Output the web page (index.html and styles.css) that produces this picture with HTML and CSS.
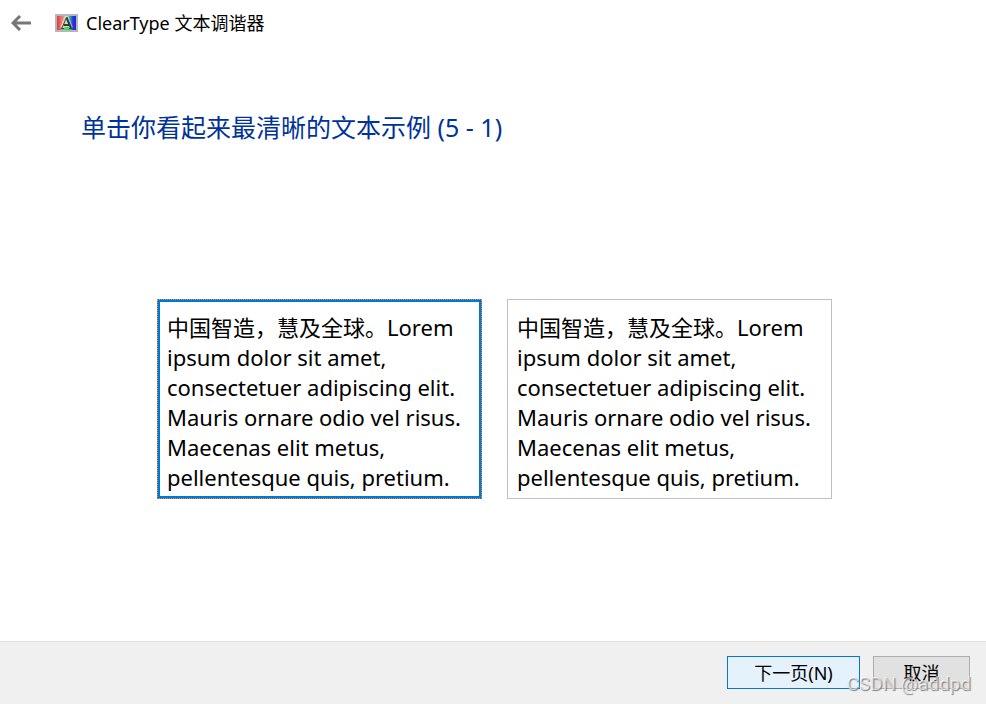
FILE: index.html
```html
<!DOCTYPE html>
<html lang="zh-CN">
<head>
    <meta charset="UTF-8">
    <meta name="viewport" content="width=device-width, initial-scale=1.0">
    <title>ClearType 文本调谐器</title>
    <link rel="stylesheet" href="styles.css">
</head>
<body>
    <header class="titlebar">
        <button class="back" type="button" aria-label="返回">
            <svg width="20" height="16" viewBox="0 0 20 16" fill="none" stroke="#767676" stroke-width="3">
                <path d="M2 8H20M9 1L2 8L9 15"/>
            </svg>
        </button>
        <svg class="app-icon" width="23" height="18" viewBox="0 0 23 18">
            <defs>
                <linearGradient id="rgb" x1="0" y1="0" x2="1" y2="0">
                    <stop offset="0" stop-color="#e03a3a"/>
                    <stop offset="0.3" stop-color="#e58a80"/>
                    <stop offset="0.5" stop-color="#7ccf8c"/>
                    <stop offset="0.7" stop-color="#2f9fae"/>
                    <stop offset="0.85" stop-color="#2333e0"/>
                    <stop offset="1" stop-color="#2a22d8"/>
                </linearGradient>
                <radialGradient id="glow" cx="0.5" cy="1" r="0.4">
                    <stop offset="0" stop-color="#22e83c"/>
                    <stop offset="1" stop-color="#22e83c" stop-opacity="0"/>
                </radialGradient>
            </defs>
            <rect width="23" height="18" fill="#b4b8be"/>
            <rect x="2" y="2" width="19" height="14" fill="url(#rgb)"/>
            <rect x="2" y="2" width="19" height="14" fill="url(#glow)"/>
            <path d="M7 14L11 4H12L16 14M9 11H15" fill="none" stroke="#ffffff" stroke-width="4" opacity="0.5"/>
            <path d="M6 14.5H9M14 14.5H18M7 14L11.5 3.5" fill="none" stroke="#404040"/>
            <path d="M11.5 3.5L16 14M9 11H14" fill="none" stroke="#383838" stroke-width="2"/>
        </svg>
        <span class="app-title">ClearType 文本调谐器</span>
    </header>
    <main>
        <h1>单击你看起来最清晰的文本示例 (5 - 1)</h1>
        <div class="samples">
            <button class="sample selected" type="button" aria-pressed="true">中国智造，慧及全球。Lorem ipsum dolor sit amet, consectetuer adipiscing elit. Mauris ornare odio vel risus. Maecenas elit metus, pellentesque quis, pretium.</button>
            <button class="sample" type="button" aria-pressed="false">中国智造，慧及全球。Lorem ipsum dolor sit amet, consectetuer adipiscing elit. Mauris ornare odio vel risus. Maecenas elit metus, pellentesque quis, pretium.</button>
        </div>
    </main>
    <footer>
        <button class="button next" type="button">下一页(N)</button>
        <button class="button cancel" type="button">取消</button>
        <span class="watermark">CSDN @addpd</span>
    </footer>
</body>
</html>
```
FILE: styles.css
```css
* {
    margin: 0;
    padding: 0;
    box-sizing: border-box;
}

body {
    display: flex;
    flex-direction: column;
    min-height: 100vh;
    background-color: #ffffff;
    color: #000000;
    font-family: "Noto Sans", "Noto Sans CJK SC", sans-serif;
}

button {
    font-family: inherit;
    color: inherit;
    cursor: pointer;
}

.titlebar {
    display: flex;
    align-items: center;
    height: 46px;
    padding-left: 11px;
}

.back {
    display: flex;
    border: none;
    background: none;
    margin-right: 24px;
}

.app-icon {
    margin-right: 8px;
}

.app-title {
    font-size: 18px;
    line-height: 24px;
}

main {
    flex: 1;
    padding: 63px 81px 0;
}

h1 {
    color: #003399;
    font-size: 25px;
    font-weight: 400;
    line-height: 36px;
}

.samples {
    display: grid;
    grid-template-columns: 1fr 1fr;
    gap: 25px;
    padding: 0 73px 0 76px;
    margin-top: 154px;
}

.sample {
    min-height: 200px;
    padding: 12px 8px 6px 9px;
    border: 1px solid #c0c0c0;
    background-color: #ffffff;
    font-size: 22px;
    line-height: 30px;
    text-align: left;
}

.sample.selected {
    padding: 10px 6px 4px 7px;
    border: 3px solid #0078d7;
    outline: 1px dotted #ff8728;
    outline-offset: -1px;
}

footer {
    position: relative;
    display: flex;
    justify-content: flex-end;
    gap: 13px;
    padding: 14px 16px 15px;
    background-color: #f0f0f0;
    border-top: 1px solid #dfdfdf;
}

.button {
    height: 33px;
    border: 1px solid #adadad;
    background-color: #e1e1e1;
    font-size: 18px;
    line-height: 24px;
}

.next {
    width: 133px;
    border-color: #0078d7;
    background-color: #e5f1fb;
}

.cancel {
    width: 97px;
}

.watermark {
    position: absolute;
    right: 15px;
    bottom: 8px;
    color: rgba(255, 255, 255, 0.6);
    font-family: Roboto, sans-serif;
    font-size: 19px;
    line-height: 24px;
    text-shadow: 1px 1px 1px #808080;
    pointer-events: none;
}
```
